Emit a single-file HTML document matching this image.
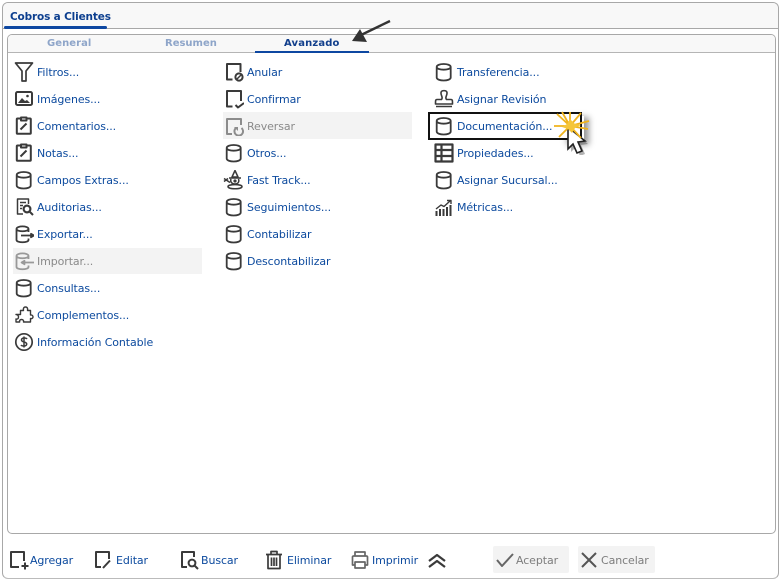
<!DOCTYPE html>
<html><head><meta charset="utf-8">
<style>
html,body{margin:0;padding:0;background:#fff}
body{width:782px;height:581px;position:relative;overflow:hidden;font-family:"DejaVu Sans","Liberation Sans",sans-serif;font-size:11px;color:#0c4a9e}
div{box-sizing:border-box}
.a{position:absolute}
.t{position:absolute;white-space:nowrap;line-height:14px;height:14px;margin-top:1px;letter-spacing:-.1px}
.d{color:#8a8a8a}
svg.i{position:absolute;width:20px;height:20px;fill:none;stroke:#3a3a3a;stroke-width:1.7;stroke-linejoin:round}
</style></head><body>
<svg width="0" height="0" style="position:absolute"><defs>
<g id="db"><path d="M2.7 5C2.7 1 16.7 1 16.7 5V15.5C16.7 19.5 2.7 19.5 2.7 15.5ZM2.7 5C2.7 8.6 16.7 8.6 16.7 5" stroke-width="1.8"/></g>
<g id="clip"><path d="M6.5 3.5H3.5C3 3.5 2.8 3.8 2.8 4.3V18C2.8 18.5 3 18.8 3.5 18.8H16C16.5 18.8 16.8 18.5 16.8 18V4.3C16.8 3.8 16.5 3.5 16 3.5H13M7 5.5V2.5H12.5V5.5ZM6.5 14.5L12.5 8.5" stroke-width="2"/></g>
</defs></svg>

<div class="a" style="left:2px;top:2px;width:777px;height:577px;border:1px solid #a8a8a8;border-radius:6px;border-bottom-color:#bbb"></div>
<div class="a" style="left:3px;top:3px;width:775px;height:26px;background:#f8f8f8;border-radius:5px 5px 0 0;border-bottom:1px solid #a8a8a8"></div>
<div class="t" style="left:10px;top:9px;font-weight:bold;font-size:10.5px;color:#0d3f8f;letter-spacing:-.15px">Cobros a Clientes</div>
<div class="a" style="left:4px;top:26px;width:103px;height:3px;background:#0d47a1;border-radius:2px"></div>

<div class="a" style="left:7px;top:34px;width:769px;height:500px;border:1px solid #a8a8a8;border-radius:5px;background:#fff"></div>
<div class="a" style="left:8px;top:35px;width:767px;height:18px;background:#f8f8f8;border-radius:4px 4px 0 0;border-bottom:1px solid #b5b5b5"></div>
<div class="t" style="left:47px;top:36px;font-weight:bold;font-size:10px;color:#8ea5c9;letter-spacing:.05px">General</div>
<div class="t" style="left:165px;top:36px;font-weight:bold;font-size:10px;color:#8ea5c9;letter-spacing:0">Resumen</div>
<div class="t" style="left:284px;top:36px;font-weight:bold;font-size:10px;color:#123f8c;letter-spacing:.15px">Avanzado</div>
<div class="a" style="left:255px;top:51px;width:114px;height:2px;background:#0d47a1"></div>
<svg class="a" style="left:345px;top:15px" width="50" height="30"><path d="M45 6L16 20" stroke="#333" stroke-width="2.4"/><path d="M7 26L22 27L15 14Z" fill="#333"/></svg>

<div class="a" style="left:13px;top:248px;width:189px;height:26px;background:#f3f3f3"></div>
<div class="a" style="left:223px;top:112px;width:189px;height:27px;background:#f3f3f3"></div>

<!-- col1 -->
<svg class="i" style="left:14px;top:61px;width:20px;height:22px" viewBox="0 0 20 22"><path d="M1.5 2H18.5L12 10V20H8V10Z" stroke-width="1.7"/></svg>
<div class="t" style="left:37px;top:65px">Filtros...</div>
<svg class="i" style="left:14px;top:89px" viewBox="0 0 20 20"><rect x="2" y="3" width="16" height="13" rx="1.5" stroke-width="2"/><path d="M4 14L8 9L11 12L13 11L16 14Z" fill="#3a3a3a" stroke="none"/><circle cx="13.5" cy="7" r="1.3" fill="#3a3a3a" stroke="none"/></svg>
<div class="t" style="left:37px;top:92px">Imágenes...</div>
<svg class="i" style="left:14px;top:115px" viewBox="0 0 20 20"><use href="#clip"/></svg>
<div class="t" style="left:37px;top:119px">Comentarios...</div>
<svg class="i" style="left:14px;top:142px" viewBox="0 0 20 20"><use href="#clip"/></svg>
<div class="t" style="left:37px;top:146px">Notas...</div>
<svg class="i" style="left:14px;top:170px" viewBox="0 0 20 20"><use href="#db"/></svg>
<div class="t" style="left:37px;top:173px">Campos Extras...</div>
<svg class="i" style="left:15px;top:197px" viewBox="0 0 20 20"><path d="M8 17H2.5V2H13.5V7M5 5.5H11M5 8.5H8M5 11.5H7" stroke-width="1.5"/><circle cx="12" cy="12" r="3.4" stroke-width="2.2"/><path d="M14.5 14.5L18 18" stroke-width="2"/></svg>
<div class="t" style="left:37px;top:200px">Auditorias...</div>
<svg class="i" style="left:14px;top:224px" viewBox="0 0 20 20"><path d="M2.5 5C2.5 1.5 14.5 1.5 14.5 5V8M2.5 5C2.5 8 14.5 8 14.5 5M2.5 5V16C2.5 19 14.5 19 14.5 16V14.5M7 11.5H18" stroke-width="1.8"/><path d="M17 9.7L20 11.5L17 13.3Z" fill="#3a3a3a"/></svg>
<div class="t" style="left:37px;top:227px">Exportar...</div>
<svg class="i" style="left:14px;top:251px;stroke:#999" viewBox="0 0 20 20"><path d="M2.5 5C2.5 1.5 14.5 1.5 14.5 5V8M2.5 5C2.5 8 14.5 8 14.5 5M2.5 5V16C2.5 19 14.5 19 14.5 16V14.5M9 11.5H21" stroke-width="1.8"/><path d="M10.5 9.7L7.5 11.5L10.5 13.3Z" fill="#999"/></svg>
<div class="t d" style="left:37px;top:254px">Importar...</div>
<svg class="i" style="left:14px;top:278px" viewBox="0 0 20 20"><use href="#db"/></svg>
<div class="t" style="left:37px;top:281px">Consultas...</div>
<svg class="i" style="left:14px;top:305px" viewBox="0 0 20 20"><path d="M2 9.5H6.5V5.5H9.5C9 3 10 2 11.5 2C13 2 14 3 13.5 5.5H16.5V10C18.5 9.8 19 11 19 12C19 13 18 14 16.5 13.5V17H9.5C10 15.5 9 14.5 7.5 14.5C6 14.5 5.3 15.5 5.7 17H2V14C3.5 14.5 4.5 13.5 4.5 12C4.5 10.5 3.5 9.5 2 9.5Z" stroke-width="1.4"/></svg>
<div class="t" style="left:37px;top:308px">Complementos...</div>
<svg class="i" style="left:14px;top:332px" viewBox="0 0 20 20"><circle cx="10" cy="10" r="8.2" stroke-width="1.7"/><path d="M13 7C12 5.5 7.5 5.5 7.5 8C7.5 10.5 12.7 9.5 12.7 12C12.7 14.5 8 14.5 7 13M10 4.5V15.5" stroke-width="1.5"/></svg>
<div class="t" style="left:37px;top:335px">Información Contable</div>

<!-- col2 -->
<svg class="i" style="left:224px;top:62px" viewBox="0 0 20 20"><path d="M8.5 17.5H3V2H16.5V10" stroke-width="2"/><circle cx="15" cy="15" r="3.6" stroke-width="2"/><path d="M13 17L17 13" stroke-width="1.5"/></svg>
<div class="t" style="left:247px;top:65px">Anular</div>
<svg class="i" style="left:224px;top:89px" viewBox="0 0 20 20"><path d="M8.5 17.5H3V2H17V12" stroke-width="2"/><path d="M11.5 16L14 18.5L20 14" stroke-width="2"/></svg>
<div class="t" style="left:247px;top:92px">Confirmar</div>
<svg class="i" style="left:224px;top:116px;stroke:#8c8c8c" viewBox="0 0 20 20"><path d="M8 18H3V3H17V9" stroke-width="2"/><path d="M12 12A4.3 4.3 0 1 0 17.5 12" stroke-width="2"/><path d="M10 11H14V15Z" fill="#8c8c8c" stroke="none"/></svg>
<div class="t d" style="left:247px;top:119px">Reversar</div>
<svg class="i" style="left:224px;top:143px" viewBox="0 0 20 20"><use href="#db"/></svg>
<div class="t" style="left:247px;top:146px">Otros...</div>
<svg class="i" style="left:223px;top:170px" viewBox="0 0 20 20"><path d="M12 .5L9 7H15ZM6 8H18M8 9C7 12 9 14 12 14C15 14 16.5 12 15.5 9M5 16.5C5 14 19 14 19 16.5C19 19.5 5 19.5 5 16.5ZM1 8.5L7 12.5M1 11.5L5 8.5" stroke-width="1.5"/><circle cx="12" cy="11" r="1.6" fill="#3a3a3a" stroke="none"/></svg>
<div class="t" style="left:247px;top:173px">Fast Track...</div>
<svg class="i" style="left:224px;top:197px" viewBox="0 0 20 20"><use href="#db"/></svg>
<div class="t" style="left:247px;top:200px">Seguimientos...</div>
<svg class="i" style="left:224px;top:224px" viewBox="0 0 20 20"><use href="#db"/></svg>
<div class="t" style="left:247px;top:227px">Contabilizar</div>
<svg class="i" style="left:224px;top:251px" viewBox="0 0 20 20"><use href="#db"/></svg>
<div class="t" style="left:247px;top:254px">Descontabilizar</div>

<!-- col3 -->
<svg class="i" style="left:434px;top:62px" viewBox="0 0 20 20"><use href="#db"/></svg>
<div class="t" style="left:457px;top:65px">Transferencia...</div>
<svg class="i" style="left:434px;top:89px" viewBox="0 0 20 20"><path d="M7.5 10.5C9.5 8 6.5 6.5 7 3.5C7.5 1 12.5 1 13 3.5C13.5 6.5 10.5 8 12.5 10.5H17C18.5 10.5 18.5 11.5 18.5 15H1.5C1.5 11.5 1.5 10.5 3 10.5ZM2 17.5H18" stroke-width="1.6"/></svg>
<div class="t" style="left:457px;top:92px">Asignar Revisión</div>
<!-- shadow behind box -->
<div class="a" style="left:566px;top:116px;width:18px;height:24px;box-shadow:3px 3px 6px 2px rgba(0,0,0,.4)"></div>
<div class="a" style="left:428px;top:112px;width:154px;height:28px;border:2px solid #111;background:#fff"></div>
<svg class="i" style="left:434px;top:116px" viewBox="0 0 20 20"><use href="#db"/></svg>
<div class="t" style="left:457px;top:119px">Documentación...</div>
<svg class="i" style="left:434px;top:143px;stroke:#3a3a3a;fill:#fff" viewBox="0 0 20 20"><path d="M1.5 1.5H18.5V18.5H1.5ZM1.5 7H18.5M1.5 13H18.5M7.5 1.5V18.5" stroke-width="2.2"/></svg>
<div class="t" style="left:457px;top:146px">Propiedades...</div>
<svg class="i" style="left:434px;top:170px" viewBox="0 0 20 20"><use href="#db"/></svg>
<div class="t" style="left:457px;top:173px">Asignar Sucursal...</div>
<svg class="i" style="left:434px;top:197px" viewBox="0 0 20 20"><path d="M2 12L7 8L10 9.5L16 4M13 3.5H17V7" stroke-width="1.4"/><path d="M2.5 14V19M6 12V19M9.5 12V19M13 10V19M16.5 8V19" stroke-width="2"/></svg>
<div class="t" style="left:457px;top:200px">Métricas...</div>

<!-- cursor/spark -->
<svg class="a" style="left:550px;top:105px" width="50" height="50" viewBox="0 0 50 50">
<path d="M18 22L18 44L23 39L27 48L32 46L28 37L35 36Z" fill="#555" opacity=".45" transform="translate(3,3)"/>
<path d="M18 22L18 44L23 39L27 48L32 46L28 37L35 36Z" fill="#fff" stroke="#222" stroke-width="1.6"/>
<path d="M20 21L7 9M20 21L12 7M20 21L20 7M20 21L31 8M20 21L39 16M20 21L4 21M20 21L38 24M20 21L9 32M20 21L31 33" stroke="#f0b31c" stroke-width="1.8"/>
<path d="M20 14L25 19L31 20L25 23L22 28L18 24L12 22L17 19Z" fill="#f5c63a"/>
</svg>

<!-- footer -->
<svg class="i" style="left:9px;top:550px" viewBox="0 0 20 20"><path d="M10 17H2V2H15V11M12.5 16H19.5M16 12.5V19.5" stroke-width="2"/></svg>
<div class="t" style="left:30px;top:553px">Agregar</div>
<svg class="i" style="left:94px;top:550px" viewBox="0 0 20 20"><path d="M7 17H2V2H15V9M9 18L16 10.5" stroke-width="2"/></svg>
<div class="t" style="left:116px;top:553px">Editar</div>
<svg class="i" style="left:180px;top:550px" viewBox="0 0 20 20"><path d="M7 17H2V2H14V7" stroke-width="2"/><circle cx="12" cy="13" r="3.4" stroke-width="2"/><path d="M14.5 15.5L18 19" stroke-width="2"/></svg>
<div class="t" style="left:201px;top:553px">Buscar</div>
<svg class="i" style="left:264px;top:550px" viewBox="0 0 20 20"><path d="M2 4.5H18M7 4V1.5H13V4M4 5V18.5H16V5M7.5 7.5V16M10 7.5V16M12.5 7.5V16" stroke-width="1.7"/></svg>
<div class="t" style="left:287px;top:553px">Eliminar</div>
<svg class="i" style="left:350px;top:550px;stroke:#666" viewBox="0 0 20 20"><path d="M5 6V2H15V6M5 15H2.5V7C2.5 6 3 6 4 6H16C17 6 17.5 6 17.5 7V15H15M5 12H15V18H5Z" stroke-width="1.7"/></svg>
<div class="t" style="left:372px;top:553px">Imprimir</div>
<svg class="i" style="left:427px;top:551px" viewBox="0 0 20 20"><path d="M2 10L10 4L18 10M2 16L10 10L18 16" stroke-width="2.2"/></svg>

<div class="a" style="left:493px;top:546px;width:76px;height:27px;background:#f3f3f3;border-radius:2px"></div>
<svg class="i" style="left:495px;top:550px;stroke:#666" viewBox="0 0 20 20"><path d="M2 10L7 16L18 4" stroke-width="2"/></svg>
<div class="t" style="left:516px;top:553px;color:#7d7d7d">Aceptar</div>
<div class="a" style="left:578px;top:546px;width:77px;height:27px;background:#f3f3f3;border-radius:2px"></div>
<svg class="i" style="left:579px;top:550px;stroke:#555" viewBox="0 0 20 20"><path d="M3 3L17 17M17 3L3 17" stroke-width="2"/></svg>
<div class="t" style="left:601px;top:553px;color:#7d7d7d">Cancelar</div>
</body></html>
